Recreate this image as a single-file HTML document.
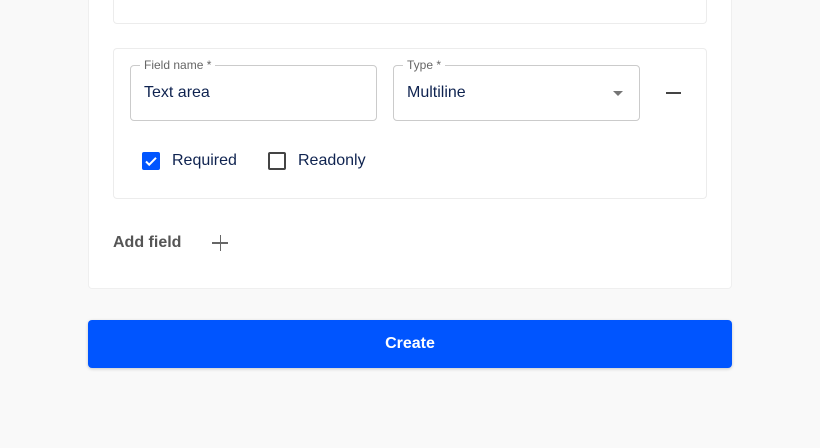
<!DOCTYPE html>
<html><head><style>
body{margin:0;width:820px;height:448px;background:#f9f9f9;font-family:"Liberation Sans",sans-serif;position:relative;overflow:hidden}
.card{position:absolute;left:88px;top:-10px;width:642px;height:297px;background:#fff;border:1px solid #efefef;border-radius:4px}
.box{position:absolute;left:113px;width:592px;background:#fff;border:1px solid #ececec;border-radius:4px}
.inp{position:absolute;top:65px;width:245px;height:54px;border:1px solid #cbcbcb;border-radius:4px}
.lab{position:absolute;top:-8px;left:9px;padding:0 4px;background:#fff;font-size:12px;color:#666}
.val{position:absolute;left:13px;top:18px;font-size:16px;color:#0f2350}
.t{position:absolute;font-size:16px;color:#0f2350}
</style></head><body>
<div class="card"></div>
<div class="box" style="top:-10px;height:32px"></div>
<div class="box" style="top:48px;height:149px"></div>
<div class="inp" style="left:130px"><div class="lab">Field name *</div><div class="val">Text area</div></div>
<div class="inp" style="left:393px"><div class="lab">Type *</div><div class="val">Multiline</div>
<div style="position:absolute;left:219px;top:25px;width:0;height:0;border-left:5px solid transparent;border-right:5px solid transparent;border-top:5px solid #757575"></div></div>
<div style="position:absolute;left:666px;top:92px;width:15px;height:1.5px;background:#444"></div>
<div style="position:absolute;left:142px;top:152px;width:18px;height:18px;background:#0055ff;border-radius:2px"><svg width="18" height="18"><path d="M4 9.5l3.2 3.2L14 5.8" stroke="#fff" stroke-width="2" fill="none"/></svg></div>
<div class="t" style="left:172px;top:152px">Required</div>
<div style="position:absolute;left:268px;top:152px;width:14px;height:14px;border:2px solid #444;border-radius:2px"></div>
<div class="t" style="left:298px;top:152px">Readonly</div>
<div style="position:absolute;left:113px;top:234px;font-size:16px;font-weight:bold;color:#555">Add field</div>
<div style="position:absolute;left:212px;top:242px;width:16px;height:1.5px;background:#666"></div>
<div style="position:absolute;left:219.5px;top:235px;width:1.5px;height:16px;background:#666"></div>
<div style="position:absolute;left:88px;top:320px;width:644px;height:48px;background:#0055ff;border-radius:4px;box-shadow:0 1px 3px rgba(0,0,0,.2);color:#fff;font-weight:bold;font-size:16px;text-align:center;line-height:48px">Create</div>
</body></html>
